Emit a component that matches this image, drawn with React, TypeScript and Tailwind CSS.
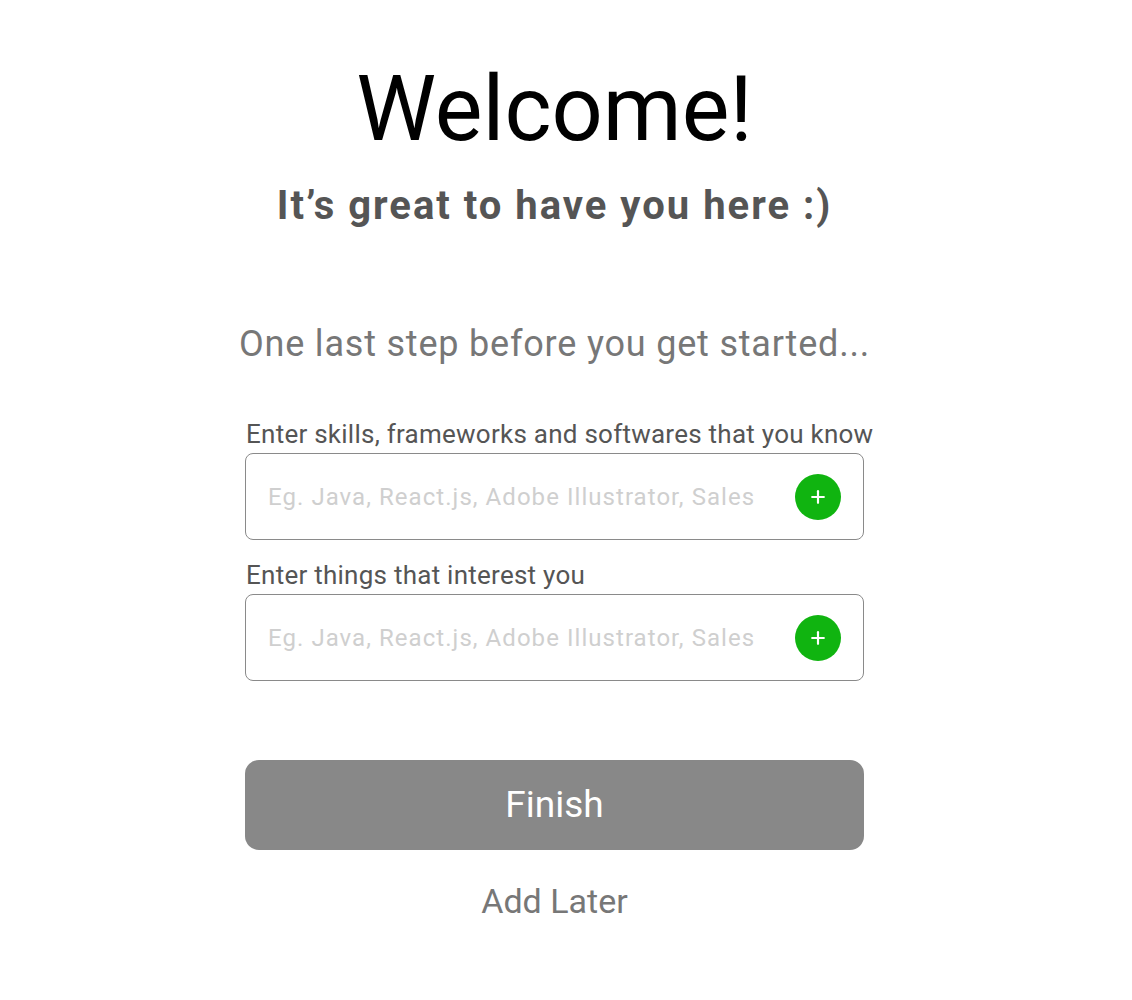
import { Plus } from "lucide-react";

function TagField({ label }: { label: string }) {
  return (
    <div className="flex w-full flex-col">
      <label className="whitespace-nowrap pl-px text-[26px] leading-[30px] tracking-[0.25px] text-[#555]">
        {label}
      </label>
      <div className="mt-[4px] flex h-[87px] items-center rounded-[8px] border-[1.5px] border-[#8a8a8a] pl-[22px] pr-[22px]">
        <input
          className="min-w-0 flex-1 bg-transparent text-[24px] tracking-[1.05px] text-[#555] outline-none placeholder:text-[#cfcfcf]"
          placeholder="Eg. Java, React.js, Adobe Illustrator, Sales"
        />
        <button className="flex h-[46px] w-[46px] shrink-0 items-center justify-center rounded-full bg-[#10b410] text-white">
          <Plus size={20} strokeWidth={2.6} />
        </button>
      </div>
    </div>
  );
}

export default function App() {
  return (
    <div className="flex min-h-[1000px] justify-center bg-white pr-[23px] font-['Roboto',sans-serif]">
      <div className="flex w-[619px] flex-col items-center">
        <h1 className="mt-[65px] text-[90px] leading-[90px] text-black">Welcome!</h1>
        <h2 className="mt-[29px] whitespace-nowrap text-[40px] font-bold leading-[44px] tracking-[2px] text-[#555]">
          It’s great to have you here :)
        </h2>
        <p className="mt-[94px] whitespace-nowrap text-[36px] leading-[44px] tracking-[0.8px] text-[#777]">
          One last step before you get started...
        </p>
        <div className="mt-[53px] flex w-full flex-col gap-[20px]">
          <TagField label="Enter skills, frameworks and softwares that you know" />
          <TagField label="Enter things that interest you" />
        </div>
        <button className="mt-[79px] h-[90px] w-full rounded-[14px] bg-[#888] text-[37px] text-white">
          Finish
        </button>
        <button className="mt-[31px] text-[34px] leading-[40px] text-[#777]">Add Later</button>
      </div>
    </div>
  );
}
